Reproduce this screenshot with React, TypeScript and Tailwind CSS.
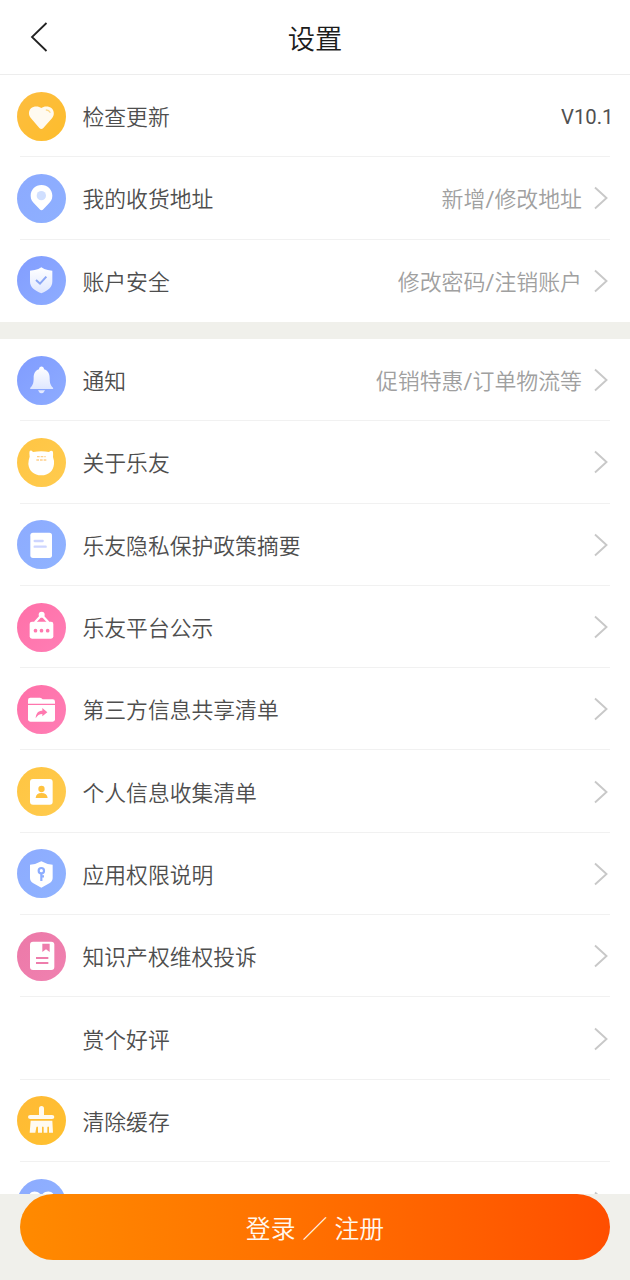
import type { ReactNode } from "react";

function Disc({ from, to, children }: { from: string; to: string; children: ReactNode }) {
  const id = `disc-${from.slice(1)}-${to.slice(1)}`;
  return (
    <svg viewBox="0 0 147 147" className="block h-[49px] w-[49px]" fill="#fff">
      <defs>
        <linearGradient id={id} x1="0" y1="0" x2="1" y2="1">
          <stop offset="0" stopColor={from} />
          <stop offset="1" stopColor={to} />
        </linearGradient>
        <linearGradient id="sheen" x1="0" y1="0" x2="0" y2="1">
          <stop offset="0" stopColor="#ffffff" />
          <stop offset="1" stopColor="#dfe7ff" />
        </linearGradient>
      </defs>
      <circle cx="73.5" cy="73.5" r="73.5" fill={`url(#${id})`} />
      {children}
    </svg>
  );
}

const HeartIcon = () => (
  <Disc from="#fdbd40" to="#fdbd2c">
    <path d="M73 48C66 42 50 41 42 49C34 57 34 70 42 79L67 108Q73 114 79 108L105 79C113 70 112 57 104 49C96 41 80 42 73 48Z" fill="#fffaf0" />
    <path d="M88 54Q96 54 99 61" stroke="#fdd98c" strokeWidth="4" fill="none" strokeLinecap="round" />
  </Disc>
);
const PinIcon = () => (
  <Disc from="#8caaff" to="#8eb0ff">
    <path d="M73.500 33C55 33 41 47 41 65C41 77 46 83 53 90L68 106Q73.500 112 79 106L94 90C101 83 106 77 106 65C106 47 92 33 73.500 33Z" />
    <circle cx="73" cy="65" r="14" fill="#d0dfff" />
  </Disc>
);
const ShieldIcon = () => (
  <Disc from="#829dff" to="#8eadff">
    <path d="M73 34L82 39Q91 43 106 44V76C106 94 94 104 73 112C52 104 39 94 39 76V44Q55 43 64 39Z" fill="url(#sheen)" />
    <path d="M57 72L69 83L88 62" stroke="#8aa6f5" strokeWidth="6" fill="none" />
  </Disc>
);
const BellIcon = () => (
  <Disc from="#809cff" to="#8eacff">
    <path d="M66 40C66 29 81 29 81 40C93 44 98 54 98 66C98 84 102 89 108 95Q110 99 107 99H41Q38 99 40 95C46 89 50 84 50 66C50 54 54 44 66 40Z" fill="url(#sheen)" />
    <path d="M63 103H84Q80 112 73.500 112T63 103Z" fill="#e3eaff" />
  </Disc>
);
const CatIcon = () => (
  <Disc from="#ffc544" to="#ffcb4e">
    <path d="M38 39Q42 35 48 42Q73 37 96 42Q103 35 107 40Q109 43 108 57Q112 68 111 78C109 99 95 112 73 112C51 112 36 99 34 78Q34 66 38 56Q36 44 38 39Z" />
    <path d="M60 56H86M58 66H88" stroke="#ffd08a" strokeWidth="4" strokeDasharray="8 3" fill="none" />
  </Disc>
);
const DocIcon = () => (
  <Disc from="#8dabff" to="#8fb3ff">
    <rect x="40" y="38" width="65" height="76" rx="8" />
    <path d="M53 63H77M53 80H86" stroke="#cdd5ff" strokeWidth="7" strokeLinecap="round" />
  </Disc>
);
const BasketIcon = () => (
  <Disc from="#ff70a8" to="#ff7eb5">
    <rect x="38" y="56" width="71" height="51" rx="7" />
    <path d="M54 58L74 36L94 58" stroke="#fff" strokeWidth="7" fill="none" />
    <circle cx="74" cy="35" r="9" />
    <g fill="#ff78af">
      <circle cx="55.500" cy="83" r="5.500" />
      <circle cx="73.500" cy="83" r="5.500" />
      <circle cx="92" cy="83" r="5.500" />
    </g>
  </Disc>
);
const FolderIcon = () => (
  <Disc from="#ff70a8" to="#ff7eb5">
    <path d="M33 56V45Q33 38 40 38H69Q74 38 77 43H107Q114 43 114 50V56Z" />
    <path d="M33 60H114V103Q114 110 107 110H40Q33 110 33 103Z" />
    <path d="M56 100C57 84 64 77 76 77V69L91 82L76 94V87C67 87 61 91 56 100Z" fill="#ff78af" />
  </Disc>
);
const PersonIcon = () => (
  <Disc from="#ffc542" to="#ffcb4e">
    <rect x="39" y="36" width="68" height="77" rx="9" />
    <g fill="#ffc23e">
      <circle cx="73.500" cy="66" r="9.500" />
      <path d="M56 93Q57 78 73.500 78T92 93Z" />
    </g>
  </Disc>
);
const KeyIcon = () => (
  <Disc from="#8dabff" to="#8fb3ff">
    <path d="M73 37Q88 46 107 47V87Q107 97 97 103L73 116L49 103Q39 97 39 87V47Q58 46 73 37Z" />
    <g stroke="#8dadff" strokeWidth="6.500" fill="none">
      <circle cx="73" cy="65" r="8" />
      <path d="M73 73V96M73 82H81" />
    </g>
  </Disc>
);
const BookIcon = () => (
  <Disc from="#ec79a8" to="#f081b0">
    <rect x="39" y="29" width="73" height="85" rx="9" />
    <path d="M76 35H98V60L87 52L76 60Z" fill="#ee7dac" />
    <path d="M57 78H94M57 93H94" stroke="#ee7dac" strokeWidth="6" />
  </Disc>
);
const BroomIcon = () => (
  <Disc from="#ffba36" to="#ffc12f">
    <path d="M66 57V38Q66 30 73.500 30T81 38V57H105Q112 57 112 63T105 69H40Q33 69 33 63T40 57Z" fill="#fffaf0" />
    <path d="M41 74H106L108 110H96V94Q93.500 89 91 94V110H80V94Q77.500 89 75 94V110H63V94Q60.500 89 58 94L55 110H38Z" fill="#fffaf0" />
  </Disc>
);
const FriendsIcon = () => (
  <Disc from="#8dabff" to="#8fb3ff">
    <path d="M73 49C63 36 47 34 38 45C28 59 42 82 73 104C104 82 119 59 109 45C100 34 83 36 73 49Z" />
  </Disc>
);

function Chevron() {
  return (
    <svg viewBox="0 0 14 24" className="ml-[12px] mr-[4px] h-[24px] w-[14px] shrink-0" fill="none" stroke="#c8c8c8" strokeWidth="1.9">
      <path d="M1 1.500L12.500 12L1 22.500" />
    </svg>
  );
}

type RowData = { label: string; icon?: ReactNode; value?: string; version?: string; arrow?: boolean };

function Row({ label, icon, value, version, arrow, last }: RowData & { last?: boolean }) {
  return (
    <li className="relative flex h-[82.3px] shrink-0 items-center pl-[16.5px] pr-[18px]">
      <span className="h-[49px] w-[49px] shrink-0">{icon}</span>
      <span className="ml-[17px] flex-1 whitespace-nowrap pt-[4px] text-[21.8px] leading-[32px] text-[#4e4e4e]">{label}</span>
      {value && <span className="whitespace-nowrap pt-[4px] text-[21.9px] leading-[32px] text-[#a0a0a0]">{value}</span>}
      {version && <span className="-mr-[1.5px] pt-[2px] text-[20.3px] leading-[32px] text-[#505050]">{version}</span>}
      {arrow && <Chevron />}
      {!last && <span className="absolute bottom-0 left-[20px] right-[20px] h-px bg-[#f1f1f1]" />}
    </li>
  );
}

const account: RowData[] = [
  { label: "检查更新", icon: <HeartIcon />, version: "V10.1" },
  { label: "我的收货地址", icon: <PinIcon />, value: "新增/修改地址", arrow: true },
  { label: "账户安全", icon: <ShieldIcon />, value: "修改密码/注销账户", arrow: true },
];

const general: RowData[] = [
  { label: "通知", icon: <BellIcon />, value: "促销特惠/订单物流等", arrow: true },
  { label: "关于乐友", icon: <CatIcon />, arrow: true },
  { label: "乐友隐私保护政策摘要", icon: <DocIcon />, arrow: true },
  { label: "乐友平台公示", icon: <BasketIcon />, arrow: true },
  { label: "第三方信息共享清单", icon: <FolderIcon />, arrow: true },
  { label: "个人信息收集清单", icon: <PersonIcon />, arrow: true },
  { label: "应用权限说明", icon: <KeyIcon />, arrow: true },
  { label: "知识产权维权投诉", icon: <BookIcon />, arrow: true },
  { label: "赏个好评", arrow: true },
  { label: "清除缓存", icon: <BroomIcon /> },
  { label: "", icon: <FriendsIcon />, arrow: true },
];

export default function App() {
  return (
    <div className="flex h-[1280px] w-[630px] flex-col overflow-hidden bg-white font-[Roboto,'Noto_Sans_CJK_SC_DemiLight','Noto_Sans_CJK_SC',sans-serif]">
      <header className="grid h-[75px] shrink-0 grid-cols-[1fr_auto_1fr] items-center border-b border-[#ededed]">
        <button aria-label="返回" className="ml-[30px] w-[18px]">
          <svg viewBox="0 0 18 30" className="h-[30px] w-[18px]" fill="none" stroke="#222" strokeWidth="1.8">
            <path d="M16.500 1L2 15L16.500 29" />
          </svg>
        </button>
        <h1 className="pt-[6px] text-[27.3px] leading-[40px] text-[#1c1c1c]">设置</h1>
      </header>
      <main className="min-h-0 flex-1 overflow-hidden">
        <ul className="flex flex-col">
          {account.map((row, i) => (
            <Row key={i} {...row} last={i === account.length - 1} />
          ))}
        </ul>
        <div className="h-[17.1px] bg-[#f0f0eb]" />
        <ul className="flex flex-col">
          {general.map((row, i) => (
            <Row key={i} {...row} />
          ))}
        </ul>
      </main>
      <footer className="h-[86px] shrink-0 bg-[#f0f0eb] px-[20px]">
        <button className="flex h-[66px] w-full items-center justify-center whitespace-pre rounded-full bg-linear-to-r from-[#ff8a00] to-[#ff4e00] pt-[5px] text-[24.8px] text-[#fff8ee] [word-spacing:1px]">
          登录 ／ 注册
        </button>
      </footer>
    </div>
  );
}
